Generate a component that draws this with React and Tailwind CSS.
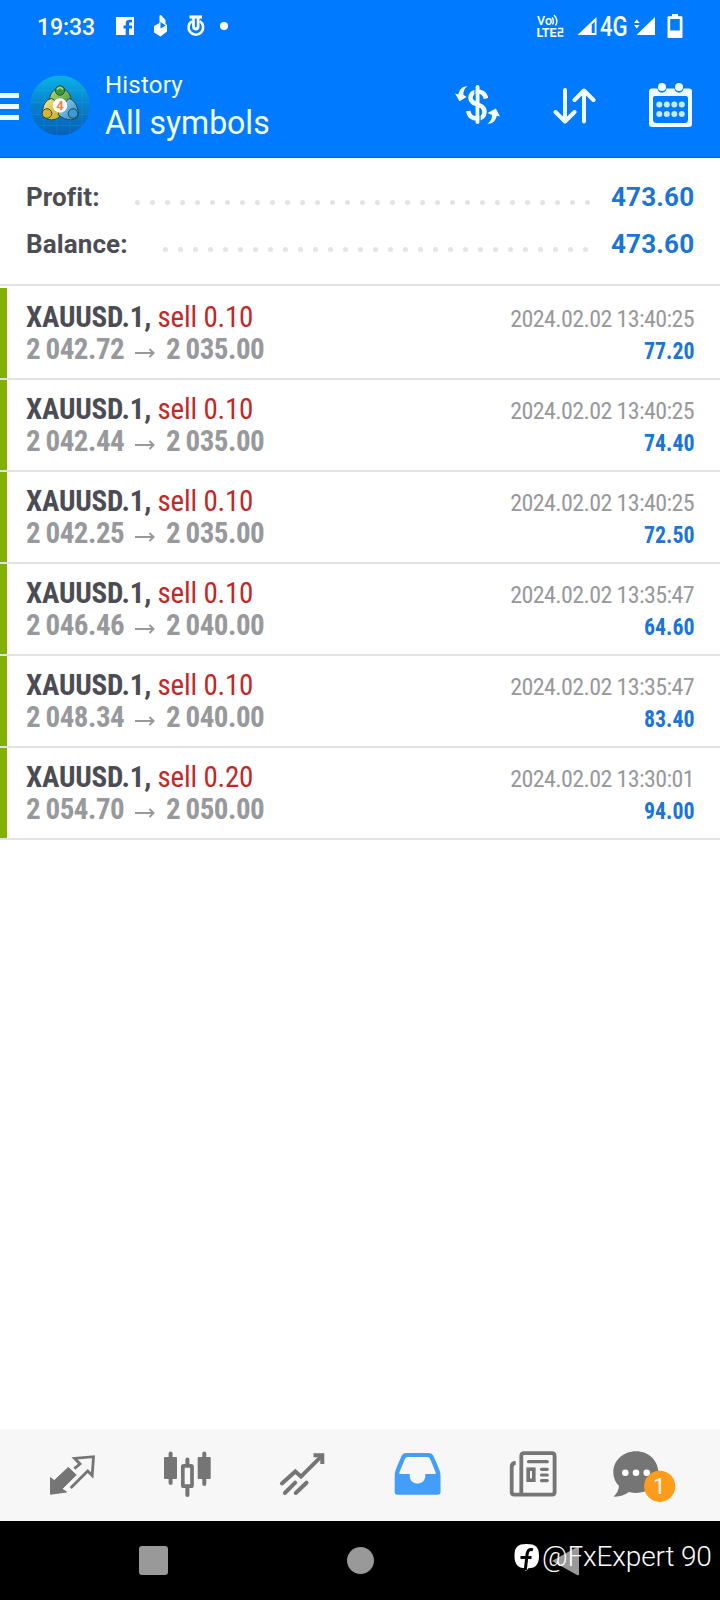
const trades = [
  { volume: '0.10', open: '2 042.72', close: '2 035.00', time: '2024.02.02 13:40:25', profit: '77.20' },
  { volume: '0.10', open: '2 042.44', close: '2 035.00', time: '2024.02.02 13:40:25', profit: '74.40' },
  { volume: '0.10', open: '2 042.25', close: '2 035.00', time: '2024.02.02 13:40:25', profit: '72.50' },
  { volume: '0.10', open: '2 046.46', close: '2 040.00', time: '2024.02.02 13:35:47', profit: '64.60' },
  { volume: '0.10', open: '2 048.34', close: '2 040.00', time: '2024.02.02 13:35:47', profit: '83.40' },
  { volume: '0.20', open: '2 054.70', close: '2 050.00', time: '2024.02.02 13:30:01', profit: '94.00' },
];

function StatusBar() {
  return (
    <div className="flex h-[52px] items-center pl-[37px] text-white">
      <span className="w-[57px] pt-[3px] whitespace-nowrap text-[23px] leading-[52px] font-medium tracking-[-0.1px]">19:33</span>
      <svg className="ml-[22px] h-[18px] w-[18px]" viewBox="0 0 18 18">
        <path fill="#fff" d="M0 0H18V18H13V11.4H16V8.5H13V6.8Q13 5.6 14.3 5.6H16V2.8H13.5Q9.7 2.8 9.7 6.5V8.5H7.5V11.4H9.7V18H0Z" />
      </svg>
      <svg className="ml-[19px] h-[22px] w-[16px]" viewBox="0 0 16 22">
        <path fill="#fff" d="M6.5 0.5L8 0L12.5 5V9L14 10V16.5L7.5 21.5L1 17.5V11L6.5 8Z" />
        <path fill="#007aff" d="M7.5 7L12.8 10.5L7.5 13.5Z" />
      </svg>
      <svg className="ml-[17px] h-[22px] w-[20px]" viewBox="0 0 20 22" fill="none" stroke="#fff">
        <path strokeWidth="3.2" d="M3.5 2H16" />
        <path strokeWidth="2.6" d="M6 6.2A7.3 7.3 0 1 0 13.7 6.2" />
        <path strokeWidth="2.8" d="M7.5 3V11.5Q7.5 14 9.8 14Q12.1 14 12.1 11.5V3" />
      </svg>
      <span className="ml-[14px] h-[8px] w-[8px] rounded-full bg-white" />
      <svg className="ml-[308px] h-[30px] w-[31px]" viewBox="0 -3 31 30" fill="none" stroke="#fff" strokeWidth="2">
        <text x="1" y="11" fontSize="12.5" fontWeight="500" fill="#fff" stroke="none" textLength="15">Vo</text>
        <path strokeWidth="1.5" d="M16 3.5Q18.5 6.5 16.5 10.5M18 1Q23 6.5 19.5 11.5" />
        <text x="0.5" y="22.8" fontSize="12.5" fontWeight="700" fill="#fff" stroke="none" textLength="20">LTE</text>
        <path strokeWidth="1.6" d="M22 14.5H26.5V18.2H22.5V22H27.5" />
      </svg>
      <svg className="ml-[10px] h-[18px] w-[20px]" viewBox="0 0 20 18">
        <path fill="#fff" fillRule="evenodd" d="M0.5 18L19.5 0V18ZM14.7 7.6V16H17.7V4.8Z" />
      </svg>
      <span className="ml-[3px] w-[29px] origin-left scale-x-[0.82] pt-[2px] whitespace-nowrap text-[27px] leading-[52px] font-medium">4G</span>
      <svg className="ml-[4px] h-[18px] w-[23px]" viewBox="0 0 23 18" fill="#fff">
        <path d="M3.5 18L22 0V18ZM1 6L3.8 2.5L6.6 6ZM1 8L3.8 11.5L6.6 8Z" />
      </svg>
      <svg className="ml-[11px] h-[24px] w-[16px]" viewBox="0 0 16 24">
        <path fill="#fff" fillRule="evenodd" d="M5 0H11V2.3H14.5Q15.5 2.3 15.5 3.3V23Q15.5 24 14.5 24H1.5Q.5 24 .5 23V3.3Q.5 2.3 1.5 2.3H5ZM3.2 5V16.5H12.8V5Z" />
      </svg>
    </div>
  );
}

function Logo() {
  return (
    <svg className="ml-[11px] h-[60px] w-[60px] shrink-0 translate-y-[0.5px]" viewBox="0 0 60 60">
      <defs>
        <linearGradient id="sky" x1="0" y1="0" x2="0" y2="1">
          <stop offset="0" stopColor="#09b3e6" />
          <stop offset=".5" stopColor="#087fce" />
          <stop offset="1" stopColor="#0661b8" />
        </linearGradient>
        <linearGradient id="leaf" x1="0" y1="0" x2="1" y2="1">
          <stop offset="0" stopColor="#b9dc83" />
          <stop offset="1" stopColor="#388d32" />
        </linearGradient>
        <linearGradient id="gold" x1="0" y1="0" x2="1" y2="1">
          <stop offset="0" stopColor="#f2e891" />
          <stop offset="1" stopColor="#c6a51f" />
        </linearGradient>
        <linearGradient id="water" x1="0" y1="0" x2="1" y2="1">
          <stop offset="0" stopColor="#a3d8f5" />
          <stop offset="1" stopColor="#2585cc" />
        </linearGradient>
      </defs>
      <circle cx="30" cy="30" r="30" fill="url(#sky)" />
      <path stroke="#4ac0ee" strokeOpacity=".15" fill="none" d="M14 5V55M27 0V60M40 2V58M52 10V50M4 15H56M0 27H60M1 39H59M8 50H52" />
      <g stroke="#244f3c" strokeWidth="1">
        <path fill="url(#leaf)" d="M20 29C18 19 23 13 30 13S42 19 41 28L36 32H24Z" />
        <path fill="url(#gold)" d="M22 23C15 24 12 31 13 38C14 45 23 46 29 42L32 36L27 27Z" />
        <path fill="url(#water)" d="M39 23C46 25 49 34 48 40C46 46 36 46 28 39L33 29Z" />
        <circle cx="30" cy="15" r="4.7" fill="#3b9639" />
        <circle cx="17" cy="38" r="4.8" fill="#d7b52d" />
        <circle cx="43" cy="38" r="4.8" fill="#3b98d9" />
      </g>
      <path d="M27 14Q30 10 33 14" stroke="#a6db8a" strokeWidth="1.5" fill="none" />
      <circle cx="30" cy="30" r="7.2" fill="#fff" />
      <text x="30" y="34.6" textAnchor="middle" fontSize="13" fontWeight="700" fill="#ef8140">4</text>
    </svg>
  );
}

function Toolbar() {
  return (
    <div className="flex h-[106px] items-center border-b border-[#0a68c8] text-[#f2fdff]">
      <div className="flex w-[19px] flex-col gap-[6px] pt-[3px]">
        <span className="h-[5px] bg-[#edfcff]" />
        <span className="h-[5px] bg-[#edfcff]" />
        <span className="h-[5px] bg-[#edfcff]" />
      </div>
      <Logo />
      <div className="ml-[15px] flex w-[345px] flex-col pt-[1px] whitespace-nowrap">
        <span className="text-[24px] leading-[34px] tracking-[0.2px]">History</span>
        <span className="origin-left scale-x-[0.97] text-[33px] leading-[41px]">All symbols</span>
      </div>
      <svg className="ml-[4px] h-[44px] w-[48px]" viewBox="0 0 48 44" fill="none" stroke="#f2fdff">
        <path strokeWidth="4" strokeLinecap="round" d="M23.5 4V39" />
        <path strokeWidth="4.5" d="M32 15.5C31 10 26.5 8.5 23.5 8.5C19 8.5 16.5 11.5 16.5 15C16.5 23 30.5 19.5 30.5 29C30.5 33 27.5 35.5 23.5 35.5C18 35.5 14.8 33 14.2 28" />
        <path stroke="#007aff" strokeWidth="1.1" d="M20.9 5V17M26.1 25V39" />
        <path fill="#f2fdff" stroke="none" d="M13.5 3.2C10 5.5 9.5 8.5 9.3 11.7L12.6 14L5.5 18.3L1 10.5L4.3 11.6C5.5 6 8.5 3 13.5 3.2ZM33.5 40.8C37 38 38 35.5 38 32L33.5 30L41.8 25.5L46 33.5L42.8 32.8C41.5 38 38.5 41 33.5 40.8Z" />
      </svg>
      <svg className="ml-[50px] h-[40px] w-[44px]" viewBox="0 0 44 40" fill="none" stroke="#f2fdff" strokeWidth="4" strokeLinecap="round" strokeLinejoin="round">
        <path d="M13 5V36M3.5 27L13 36.5L22.5 27M32 36.5V6M22.5 15L32 5.5L41.5 15" />
      </svg>
      <svg className="ml-[52px] h-[46px] w-[46px]" viewBox="0 0 46 46">
        <path fill="#f2fdff" fillRule="evenodd" d="M4 6.5H9.5C9.5 12 18.5 12 18.5 6.5H26.5C26.5 12 35.5 12 35.5 6.5H41Q44 6.5 44 9.5V42Q44 45 41 45H4Q1 45 1 42V9.5Q1 6.5 4 6.5ZM7 14Q5 14 5 16V37.5Q5 41 8.5 41H36.5Q40 41 40 37.5V16Q40 14 38 14Z" />
        <circle cx="14" cy="5" r="4" fill="#f2fdff" />
        <circle cx="31" cy="5" r="4" fill="#f2fdff" />
        {[11.3, 18.8, 26.3, 33.8].map((x) => (
          <g key={x} fill="#c2ebff">
            <circle cx={x} cy="22.5" r="3" />
            <circle cx={x} cy="32" r="3" />
          </g>
        ))}
      </svg>
    </div>
  );
}

function Dots({ count }) {
  return (
    <div className="mt-[9px] flex gap-[10px]">
      {Array.from({ length: count }, (_, i) => (
        <span key={i} className="h-[5px] w-[5px] shrink-0 rounded-full bg-[#e4e4e5]" />
      ))}
    </div>
  );
}

function SummaryRow({ label, value, dots, end }) {
  return (
    <div className="flex h-[47px] items-center px-[26px] text-[26px] font-bold whitespace-nowrap">
      <span className="tracking-[0.1px] text-[#4c4d54]">{label}</span>
      <div className={'ml-auto ' + end}><Dots count={dots} /></div>
      <span className="w-[83px] text-right tracking-[0.2px] text-[#1b74d8]">{value}</span>
    </div>
  );
}

function TradeRow({ trade }) {
  return (
    <div className="flex h-[92px] flex-col">
      <div className="flex h-[90px] border-l-[7px] border-[#80b000] pt-[13px] pr-[26px] pl-[19px] font-['Roboto_Condensed',Roboto,sans-serif] whitespace-nowrap [font-stretch:75%]">
        <div className="flex flex-1 flex-col text-[29px] leading-[32px]">
          <div className="tracking-[-0.2px]">
            <span className="font-bold text-[#4c4d54]">XAUUSD.1,</span>{' '}
            <span className="text-[#c12827]">sell {trade.volume}</span>
          </div>
          <div className="flex font-bold tracking-[-0.5px] text-[#98999c] [word-spacing:-0.8px]">
            <span className="w-[98px]">{trade.open}</span>
            <svg className="mt-[14px] ml-[11px] h-[12px] w-[20px]" viewBox="0 0 20 12" fill="none" stroke="#98999c" strokeWidth="2">
              <path d="M0 6H18M14.5 2L18.5 6L14.5 10" />
            </svg>
            <span className="ml-[11px]">{trade.close}</span>
          </div>
        </div>
        <div className="flex flex-col items-end pt-[2px] text-[24px] leading-[32px]">
          <span className="tracking-[-0.61px] text-[#98999c]">{trade.time}</span>
          <span className="origin-right scale-x-[0.91] font-bold text-[#1b74d8]">{trade.profit}</span>
        </div>
      </div>
      <div className="h-[2px] bg-[#e2e2e3]" />
    </div>
  );
}

function TabBar() {
  return (
    <div className="flex h-[92px] items-center gap-[65px] bg-[#f7f7f7] pl-[47px]">
      <svg className="h-[50px] w-[50px] shrink-0" viewBox="0 0 50 50">
        <path fill="#757575" stroke="#757575" strokeLinejoin="round" d="M3.5 27.7L7.3 30.6L21.3 17.4L29.2 25L15 38.9L19.5 42L3.5 44.2Z" />
        <path fill="none" stroke="#757575" strokeWidth="2.8" d="M27.3 18.7L33 14L27.5 8.3L46.5 6.7L45.2 25.5L40.7 21L23.7 38" />
      </svg>
      <svg className="h-[50px] w-[50px] shrink-0" viewBox="0 0 50 50" fill="#757575">
        <rect x="2" y="7" width="13" height="22" rx="1" />
        <rect x="35.7" y="7" width="13" height="22" rx="1" />
        <rect x="20.8" y="15.8" width="9.2" height="20.4" rx="1" fill="none" stroke="#757575" strokeWidth="3.7" />
        <path fill="none" stroke="#757575" strokeWidth="4" strokeLinecap="round" d="M8.6 3.5V33M42.3 3.5V34M25.4 9.5V14M25.4 38V45" />
      </svg>
      <svg className="h-[50px] w-[50px] shrink-0" viewBox="0 0 50 50" fill="none" stroke="#757575" strokeWidth="4" strokeLinecap="round">
        <path d="M4.9 33.5L18.3 21.4L24 26.6L45 5.7M7.9 43L18.2 32.7M18.8 43L29.5 32.7" />
        <path strokeLinecap="butt" d="M36.5 5.3H45.3V14" />
      </svg>
      <svg className="h-[50px] w-[50px] shrink-0" viewBox="0 0 50 50">
        <path fill="#429dfb" fillRule="evenodd" d="M14 3H37Q40 3 41.2 5.5L46.3 17Q48.5 21.5 48.5 26V42Q48.5 44.8 45.7 44.8H5.5Q2.7 44.8 2.7 42V26Q2.7 21.5 4.8 17L9.5 6Q11 3 14 3ZM15.5 7Q13.8 7 13 8.8L7.3 22.5Q6.8 24 8.5 24H17.7V26C18 36 33 36 33.3 26V24H42.5Q44.3 24 43.7 22.5L38 8.8Q37.2 7 35.5 7Z" />
      </svg>
      <svg className="h-[50px] w-[50px] shrink-0" viewBox="0 0 50 50" fill="none" stroke="#757575" strokeWidth="3.8">
        <path d="M8.7 13Q4.7 13 4.7 17V42Q4.7 44.7 7.4 44.7H45Q47.6 44.7 47.6 42V6Q47.6 3.2 45 3.2H17Q14.3 3.2 14.3 6V44" />
        <rect x="21.2" y="19.2" width="5.6" height="11" strokeWidth="3.6" />
        <path strokeWidth="3.2" strokeLinecap="round" d="M21.5 11.7H40.3M34.5 19.3H40.3M34.5 25H40.3M34.5 30.6H40.3" />
      </svg>
      <svg className="-ml-[15px] h-[54px] w-[75px] shrink-0 translate-y-[2px]" viewBox="0 0 75 54">
        <path fill="#757575" d="M29 1.3C41.5 1.3 51.3 10.5 51.3 22.3S41.5 43 29 43Q25.5 43 22 42Q15 47 6.7 46.6Q11.5 42 12 36Q6.3 30.5 6.3 22C6.3 10.5 16.5 1.3 29 1.3Z" />
        <g fill="#fff">
          <circle cx="18.3" cy="22.7" r="3.3" />
          <circle cx="29" cy="22.7" r="3.3" />
          <circle cx="39.7" cy="22.7" r="3.3" />
        </g>
        <circle cx="52.7" cy="36.3" r="15.6" fill="#ff9c1c" />
        <text x="52.3" y="44.2" fill="#fff" fontSize="22" textAnchor="middle">1</text>
      </svg>
    </div>
  );
}

function SystemNav() {
  return (
    <div className="relative flex h-[79px] items-center bg-black pl-[139px]">
      <span className="h-[29px] w-[29px] rounded-[3px] bg-[#999]" />
      <span className="ml-[179px] h-[27px] w-[27px] rounded-full bg-[#999]" />
      <svg className="ml-[177px] h-[30px] w-[28px]" viewBox="0 0 28 30">
        <path fill="#999" d="M1 15L26 1Q28 0 28 2V28Q28 30 26 29Z" />
      </svg>
      <div className="absolute top-[18px] left-[514px] flex items-center text-white">
        <svg className="h-[28px] w-[26px]" viewBox="0 0 26 28">
          <path fill="#fff" d="M12.5 1C22 1 25 4 25 13C25 21 22 25 14.5 25.3L11.5 28.5V25.3C3.5 25 .5 21 .5 13C.5 4 3.5 1 12.5 1Z" />
          <path fill="none" stroke="#000" strokeWidth="3" d="M19 6.8C14.5 5.5 13.5 8 13 12L11.3 27M6.5 14.5H17.5" />
        </svg>
        <span className="ml-[2px] text-[28px] leading-[36px] font-[350] tracking-[-0.15px] whitespace-nowrap">@FxExpert 90</span>
      </div>
    </div>
  );
}

export default function App() {
  return (
    <div className="flex h-[1600px] w-[720px] flex-col overflow-hidden bg-white font-['Roboto',sans-serif]">
      <header className="h-[158px] bg-[#007aff]">
        <StatusBar />
        <Toolbar />
      </header>
      <section className="h-[128px] border-b-2 border-[#e2e2e3] pt-[16px]">
        <SummaryRow label="Profit:" value="473.60" dots={31} end="mr-[21px]" />
        <SummaryRow label="Balance:" value="473.60" dots={29} end="mr-[23px]" />
      </section>
      <main className="flex-1 pt-[2px]">
        {trades.map((trade, i) => (
          <TradeRow key={i} trade={trade} />
        ))}
      </main>
      <TabBar />
      <SystemNav />
    </div>
  );
}
